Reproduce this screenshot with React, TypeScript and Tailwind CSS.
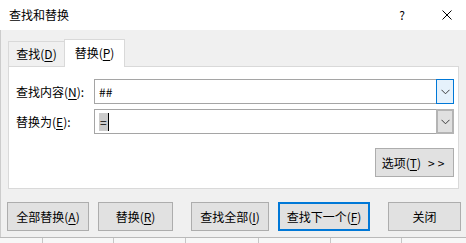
import type { ReactNode } from "react";

const FONT = "font-['Noto_Sans_CJK_SC','Microsoft_YaHei',sans-serif]";

function Mn({ children }: { children: ReactNode }) {
  return <span className="underline underline-offset-[2px] decoration-1">{children}</span>;
}

function Chevron() {
  return (
    <svg width="9" height="6" viewBox="0 0 9 6" fill="none" stroke="#3c3c3c" strokeWidth="1">
      <path d="M0.5 0.8 L4.5 4.8 L8.5 0.8" />
    </svg>
  );
}

interface BtnProps {
  className: string;
  focused?: boolean;
  children: ReactNode;
}

function Btn({ className, focused, children }: BtnProps) {
  return (
    <button
      className={
        "h-[29px] shrink-0 flex items-center justify-center bg-[#e1e1e1] leading-none " +
        (focused ? "border-2 border-[#0078d7] " : "border border-[#adadad] ") +
        className
      }
    >
      {children}
    </button>
  );
}

export default function App() {
  return (
    <div className={`w-[466px] h-[243px] overflow-hidden bg-white text-[12px] leading-none text-black flex flex-col ${FONT}`}>
      {/* title bar */}
      <div className="h-[30px] shrink-0 flex items-center pl-[9px] bg-white">
        <span>查找和替换</span>
        <span className="ml-auto">?</span>
        <svg className="ml-[37px] mr-[14px]" width="10" height="10" viewBox="0 0 10 10" stroke="#000" strokeWidth="1">
          <path d="M0.5 0.5 L9.5 9.5 M9.5 0.5 L0.5 9.5" />
        </svg>
      </div>

      {/* dialog body */}
      <div className="h-[207px] shrink-0 bg-[#f0f0f0] border-l border-[#cccccc] flex flex-col">
        {/* tabs */}
        <div className="pt-[9px] pl-[7px] flex items-end">
          <div className="w-[56px] h-[25px] border-l border-t border-[#d9d9d9] bg-[#f0f0f0] flex items-center justify-center">
            <span>
              查找(<Mn>D</Mn>)
            </span>
          </div>
          <div className="relative z-10 -mb-px w-[61px] h-[28px] border-l border-t border-r border-[#d9d9d9] bg-white flex items-center justify-center pb-[1px]">
            <span>
              替换(<Mn>P</Mn>)
            </span>
          </div>
        </div>

        {/* panel */}
        <div className="ml-[7px] w-[451px] h-[123px] border border-[#d9d9d9] bg-white pt-[12px] pl-[7px] pr-[4px] flex flex-col">
          <div className="flex items-center h-[25px]">
            <span className="w-[78px] shrink-0">
              查找内容(<Mn>N</Mn>):
            </span>
            <div className="w-[360px] h-[25px] border border-[#a5a5a5] bg-white flex items-center">
              <span className="flex-1 pl-[4px]">##</span>
              <div className="self-stretch -my-px -mr-px w-[18px] border border-[#0078d7] bg-[#e5f1fb] flex items-center justify-center">
                <Chevron />
              </div>
            </div>
          </div>

          <div className="flex items-center h-[25px] mt-[5px]">
            <span className="w-[78px] shrink-0">
              替换为(<Mn>E</Mn>):
            </span>
            <div className="w-[360px] h-[25px] border border-[#a5a5a5] bg-white flex items-center">
              <div className="flex-1 pl-[4px] flex items-center">
                <span className="bg-[#cccccc] h-[18px] px-[1px] flex items-center">=</span>
                <span className="w-px h-[18px] bg-black" />
              </div>
              <div className="self-stretch -my-px -mr-px w-[18px] border-2 border-[#b4b4b4] bg-[#e0e0e0] flex items-center justify-center">
                <Chevron />
              </div>
            </div>
          </div>

          <div className="flex justify-end mt-[14px]">
            <Btn className="w-[79px]">
              <span>
                选项(<Mn>T</Mn>)
                <span className="ml-[7px] tracking-[3px]">&gt;&gt;</span>
              </span>
            </Btn>
          </div>
        </div>

        {/* bottom buttons */}
        <div className="mt-[13px] pl-[6px] flex">
          <Btn className="w-[82px]">
            <span>
              全部替换(<Mn>A</Mn>)
            </span>
          </Btn>
          <Btn className="w-[75px] ml-[9px]">
            <span>
              替换(<Mn>R</Mn>)
            </span>
          </Btn>
          <Btn className="w-[78px] ml-[18px]">
            <span>
              查找全部(<Mn>I</Mn>)
            </span>
          </Btn>
          <Btn className="w-[92px] ml-[9px]" focused>
            <span>
              查找下一个(<Mn>F</Mn>)
            </span>
          </Btn>
          <Btn className="w-[73px] ml-[18px]">
            <span>关闭</span>
          </Btn>
        </div>
      </div>

      {/* sheet behind the dialog */}
      <div className="flex-1 border-t border-[#b9b9b9] bg-[#f7f7f7] flex">
        <div className="w-[42px] shrink-0" />
        <div className="w-[71px] shrink-0 border-l border-[#c6c6c6]" />
        <div className="w-[72px] shrink-0 border-l border-[#c6c6c6]" />
        <div className="w-[73px] shrink-0 border-l border-[#c6c6c6]" />
        <div className="w-[72px] shrink-0 border-l border-[#c6c6c6]" />
        <div className="w-[71px] shrink-0 border-l border-[#c6c6c6]" />
        <div className="flex-1 border-l border-[#c6c6c6]" />
      </div>
    </div>
  );
}
